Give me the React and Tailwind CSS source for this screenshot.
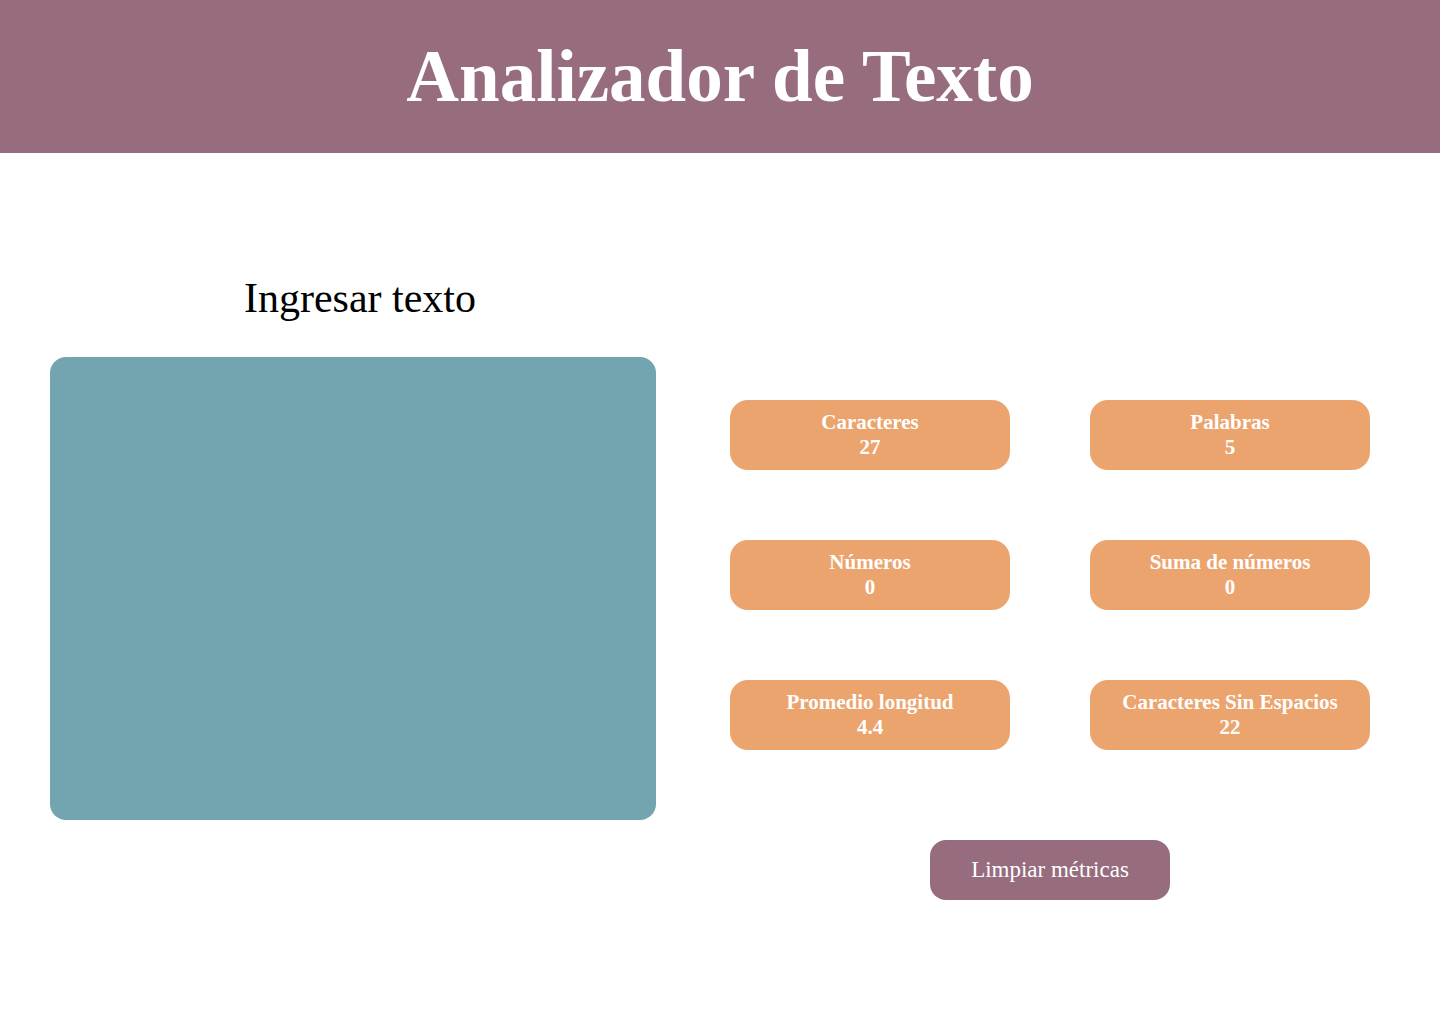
import React, { useState } from 'react';

const metrics = [
  { label: 'Caracteres', value: '27' },
  { label: 'Palabras', value: '5' },
  { label: 'Números', value: '0' },
  { label: 'Suma de números', value: '0' },
  { label: 'Promedio longitud', value: '4.4' },
  { label: 'Caracteres Sin Espacios', value: '22' },
];

const MetricCard = ({ label, value }) => (
  <div className="flex h-[70px] w-[280px] flex-col items-center justify-center rounded-[18px] bg-[#eca46f] text-[21px] font-bold leading-[25px] text-white">
    <span>{label}</span>
    <span>{value}</span>
  </div>
);

export default function App() {
  const [text, setText] = useState('');

  return (
    <div className="min-h-screen bg-white font-[family-name:'Liberation_Serif',serif]">
      <header className="flex h-[153px] items-center justify-center bg-[#966c7e]">
        <h1 className="text-[73px] font-black leading-none text-white">
          Analizador de Texto
        </h1>
      </header>

      <main className="flex px-[50px]">
        <section className="flex w-[606px] flex-col">
          <h2 className="pl-[14px] pt-[123px] text-center text-[42px] leading-[44px] text-black">Ingresar texto</h2>
          <textarea
            value={text}
            onChange={(e) => setText(e.target.value)}
            className="mt-[37px] h-[463px] w-full resize-none rounded-[16px] bg-[#73a5b0] p-4 text-white outline-none"
          />
        </section>

        <section className="ml-[74px] flex w-[640px] flex-col items-center pt-[247px]">
          <div className="grid grid-cols-2 gap-x-[80px] gap-y-[70px]">
            {metrics.map((m) => (
              <MetricCard key={m.label} label={m.label} value={m.value} />
            ))}
          </div>
          <button
            onClick={() => setText('')}
            className="mt-[90px] h-[60px] w-[240px] rounded-[16px] bg-[#966c7e] text-[23px] text-white"
          >
            Limpiar métricas
          </button>
        </section>
      </main>
    </div>
  );
}
